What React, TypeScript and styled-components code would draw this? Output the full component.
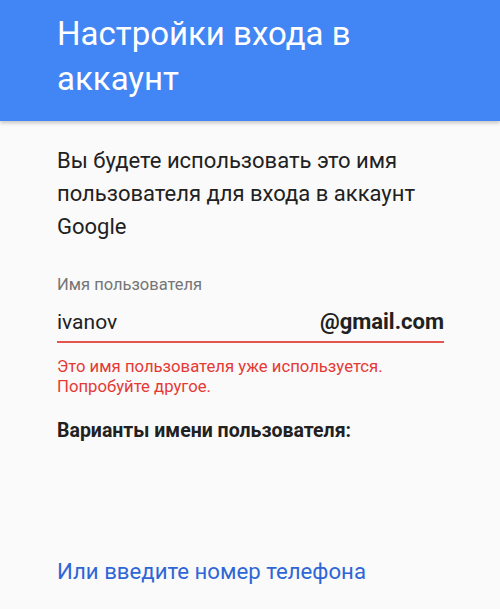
import React from "react";
import styled, { createGlobalStyle } from "styled-components";

const GlobalStyle = createGlobalStyle`
  html, body {
    margin: 0;
    padding: 0;
    background: #fafafa;
  }
  body {
    font-family: Roboto, "Liberation Sans", sans-serif;
  }
`;

const App: React.FunctionComponent = () => {
  return (
    <Page>
      <GlobalStyle />
      <Header>
        <HeaderTitle>Настройки входа в аккаунт</HeaderTitle>
      </Header>
      <Content>
        <Intro>
          Вы будете использовать это имя пользователя для входа в аккаунт
          Google
        </Intro>
        <FieldLabel>Имя пользователя</FieldLabel>
        <Field>
          <FieldValue>ivanov</FieldValue>
          <Domain>@gmail.com</Domain>
        </Field>
        <ErrorTxt>
          Это имя пользователя уже используется.
          <br />
          Попробуйте другое.
        </ErrorTxt>
        <SuggestTitle>Варианты имени пользователя:</SuggestTitle>
        <PhoneLink>Или введите номер телефона</PhoneLink>
      </Content>
    </Page>
  );
};

const Page = styled.div`
  width: 500px;
  height: 609px;
  display: flex;
  flex-direction: column;
  background: #fafafa;
  overflow: hidden;
`;

const Header = styled.div`
  height: 121px;
  flex-shrink: 0;
  background-color: #4285f4;
  box-shadow: 0 2px 4px rgba(0, 0, 0, 0.22);
  padding: 11px 40px 0 57px;
  box-sizing: border-box;
  position: relative;
  z-index: 1;
`;

const HeaderTitle = styled.h1`
  margin: 0;
  font-weight: 400;
  font-size: 33px;
  line-height: 45px;
  color: #ffffff;
  max-width: 330px;
`;

const Content = styled.div`
  flex: 1;
  display: flex;
  flex-direction: column;
  padding: 0 56px 0 57px;
`;

const Intro = styled.p`
  margin: 23px 0 0 0;
  font-size: 22px;
  line-height: 33px;
  color: #212121;
`;

const FieldLabel = styled.div`
  margin-top: 31px;
  font-size: 16.5px;
  line-height: 22px;
  color: #757575;
`;

const Field = styled.div`
  display: flex;
  align-items: baseline;
  justify-content: space-between;
  margin-top: 12px;
  padding-bottom: 5px;
  border-bottom: 2px solid #e2564f;
`;

const FieldValue = styled.span`
  font-size: 21px;
  line-height: 28px;
  color: #212121;
`;

const Domain = styled.span`
  font-size: 22px;
  font-weight: 700;
  line-height: 28px;
  color: #212121;
`;

const ErrorTxt = styled.div`
  margin-top: 14px;
  font-size: 16.7px;
  line-height: 20px;
  color: #e53935;
`;

const SuggestTitle = styled.div`
  margin-top: 21px;
  font-size: 19.5px;
  font-weight: 700;
  line-height: 26px;
  color: #212121;
`;

const PhoneLink = styled.a`
  margin-top: auto;
  margin-bottom: 24px;
  font-size: 22.2px;
  line-height: 28px;
  color: #2f66d6;
  cursor: pointer;
`;

export default App;
